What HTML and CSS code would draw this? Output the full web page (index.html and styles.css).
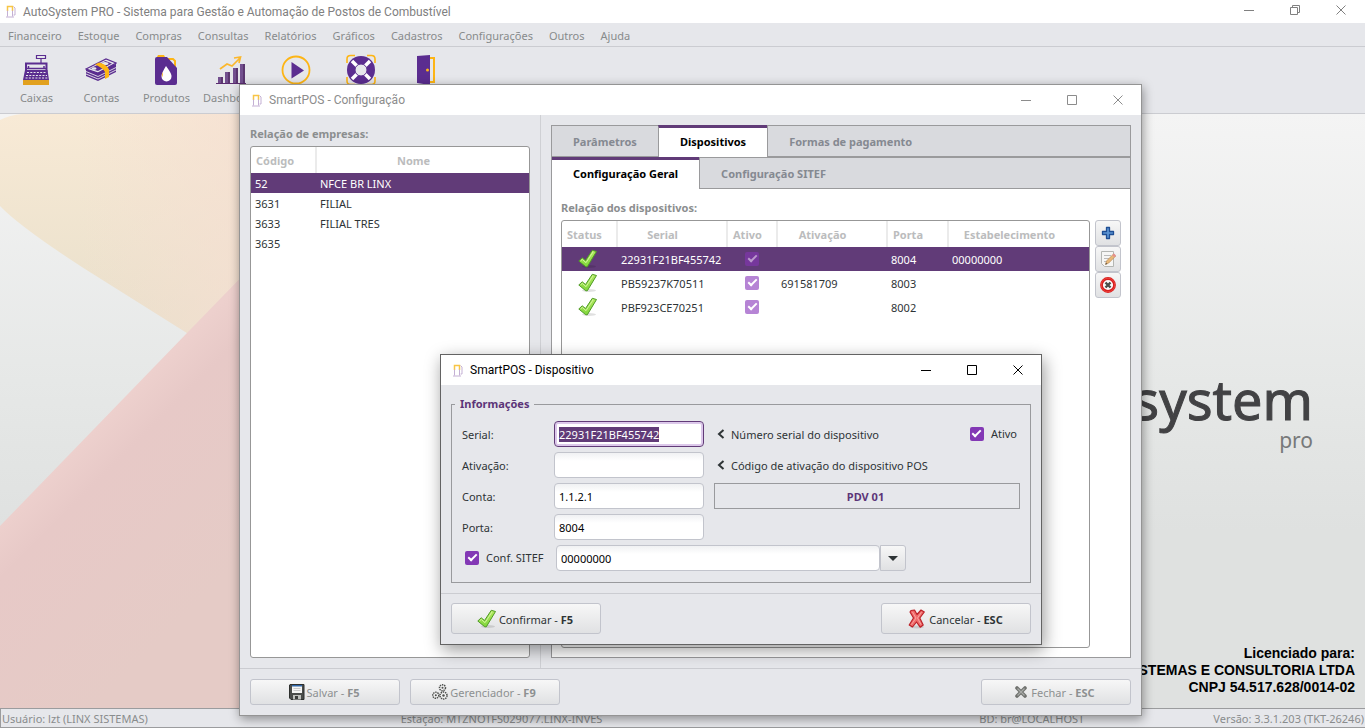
FILE: index.html
```html
<!DOCTYPE html>
<html lang="pt-BR">
<head>
<meta charset="utf-8">
<title>AutoSystem PRO</title>
<link rel="stylesheet" href="styles.css">
</head>
<body>
<svg class="defs" aria-hidden="true">
  <defs>
    <linearGradient id="leaf" x1="0" y1="0" x2="0" y2="1"><stop offset="0" stop-color="#b4ea62"/><stop offset="1" stop-color="#7fd63a"/></linearGradient>
    <symbol id="pump" viewBox="0 0 10 13">
      <path d="M1.500 6V1.500h5V6" fill="none" stroke="#f8c545" stroke-width="1.500"/>
      <path d="M1.500 5.500v6M6.500 5.500v6M0 12h8M7.500 1.500l1.500 1.500v7H7.500" fill="none" stroke="#c4b0d4"/>
    </symbol>
    <symbol id="tick" viewBox="0 0 20 20">
      <ellipse cx="11" cy="17.500" rx="7" ry="1.500" fill="#000" opacity=".12"/>
      <path d="M.8 12l3.400-3.200 3.300 2.700L14.300 1.300l4.200 1.200L9.300 17.800H7.800z" fill="url(#leaf)" stroke="#4f9a26" stroke-linejoin="round"/>
      <path d="M2.700 11.800l1.600-1.400 3.700 3.300L15.200 2.700" fill="none" stroke="#d5f5a0" stroke-width="1"/>
    </symbol>
    <symbol id="cross" viewBox="0 0 20 20">
      <ellipse cx="10" cy="18" rx="7" ry="1.500" fill="#000" opacity=".12"/>
      <path d="M4 1.500L7.500 1 10 5.500 14 1l3.300 2-4.500 6 3.400 7-3 2.200L9.500 13 5.500 18l-3.300-2L6.500 9 3 3z" fill="#f06a6a" stroke="#bb2229" stroke-width="1.200" stroke-linejoin="round"/>
      <path d="M5.500 3l3.500 6-4.500 6.500M14.500 3.200l-4 5.800 3.500 6.500" fill="none" stroke="#f9a3a1"/>
    </symbol>
    <symbol id="close" viewBox="0 0 10 10"><path d="M.5.500l9 9M9.500.500l-9 9" stroke="currentColor" fill="none"/></symbol>
    <symbol id="min" viewBox="0 0 10 10"><path d="M0 5.500h10" stroke="currentColor"/></symbol>
    <symbol id="max" viewBox="0 0 10 10"><path d="M.5.500h9v9h-9z" stroke="currentColor" fill="none"/></symbol>
    <symbol id="restore" viewBox="0 0 10 10"><path d="M.5 2.500h7v7h-7zM2.500 2.500v-2h7v7h-2" stroke="currentColor" fill="none"/></symbol>
  </defs>
</svg>

<header class="titlebar app-title">
  <svg class="pump"><use href="#pump"/></svg>
  <span class="title">AutoSystem PRO - Sistema para Gestão e Automação de Postos de Combustível</span>
  <button class="winbtn" aria-label="Minimizar"><svg><use href="#min"/></svg></button>
  <button class="winbtn" aria-label="Restaurar"><svg><use href="#restore"/></svg></button>
  <button class="winbtn" aria-label="Fechar"><svg><use href="#close"/></svg></button>
</header>

<nav class="menubar">
  <button>Financeiro</button><button>Estoque</button><button>Compras</button><button>Consultas</button><button>Relatórios</button><button>Gráficos</button><button>Cadastros</button><button>Configurações</button><button>Outros</button><button>Ajuda</button>
</nav>

<div class="toolbar">
  <button class="tool">
    <svg viewBox="0 0 32 32"><path d="M16.500 1.500h9v3h-9zM21 4.500V9" fill="none" stroke="#5b2d90" stroke-width="1.200"/><path d="M5 8.500h22.500v10h-22.500z" fill="#5b2d90"/><path d="M7 10.500h18.500v6H7z" fill="#e6e7eb"/><path d="M6 14.500h20.500M8.500 12v2M24 12v2" stroke="#5b2d90" stroke-width="1.500"/><path d="M5 16h22.500l1.500 10H3z" fill="#5b2d90"/><path d="M7 18.500h19M6 21.500h21M5.500 24h22" stroke="#e6e7eb" stroke-width="1" stroke-dasharray="2 1.300"/><path d="M3 26h26v5H3z" fill="#e2a11f"/></svg>
    <span>Caixas</span>
  </button>
  <button class="tool">
    <svg viewBox="0 0 32 32"><path d="M1 15v7l12 5 18-9v-8z" fill="#5b2d90"/><path d="M1 15L21 5l10 4-18 10z" fill="#e6e7eb" stroke="#5b2d90" stroke-width="1.300"/><path d="M5 14.500l15.500-7.500 6.500 2.500-14 7.500z" fill="#5b2d90"/><ellipse cx="20" cy="9.500" rx="3.500" ry="1.600" fill="#e6e7eb"/><ellipse cx="9" cy="14.500" rx="2.500" ry="1.200" fill="#e6e7eb"/><path d="M1 17.500l12 5 18-9M1 20l12 5 18-9" fill="none" stroke="#e6e7eb" stroke-width=".9"/><path d="M10 10.500l4-2q8 2 10 7v7.500l-4 2v-7q-3-5-10-7.500z" fill="#fdb515"/></svg>
    <span>Contas</span>
  </button>
  <button class="tool">
    <svg viewBox="0 0 32 32"><path d="M8 1h6l1 2H7z" fill="#fdb515"/><path d="M17 5h6l2 2v7" fill="none" stroke="#fdb515" stroke-width="2"/><path d="M7 3h10l10 11v15q0 2-2 2H7q-2 0-2-2V5q0-2 2-2z" fill="#5b2d90"/><path d="M16 12q6 8 5.500 10.500a5 5 0 01-10 0Q11.500 19 16 12z" fill="#fff"/><path d="M13 18q-2 3-.5 5z" fill="#fdb515"/></svg>
    <span>Produtos</span>
  </button>
  <button class="tool">
    <svg viewBox="0 0 32 32"><path d="M1 29.500h30" stroke="#5b2d70"/><path d="M3 23h5v6H3zM10 18h5v11h-5zM18 14h5v15h-5zM25 10h5v19h-5z" fill="#73508f"/><path d="M6 23h2v6H6zM13 18h2v11h-2zM21 14h2v15h-2zM28 10h2v19h-2z" fill="#5b3770"/><path d="M5 15l7-5 5 2 8-8M19 4l6.500-1-1.500 6" fill="none" stroke="#fbb72c" stroke-width="1.700"/></svg>
    <span>Dashboard</span>
  </button>
  <button class="tool" aria-label="Executar">
    <svg viewBox="0 0 32 32"><circle cx="16" cy="16" r="13.500" fill="none" stroke="#fdb515" stroke-width="1.800"/><path d="M11.500 8v16.500l12.500-8z" fill="#5b2d90"/></svg>
  </button>
  <button class="tool" aria-label="Suporte">
    <svg viewBox="0 0 32 32"><path d="M2 9V5q0-3.500 3.500-3.500H10M22 1.500h4.500Q30 1.500 30 5v4M30 23v4q0 3.500-3.500 3.500H22M10 30.500H5.500Q2 30.500 2 27v-4" fill="none" stroke="#fdb515" stroke-width="1.600"/><circle cx="16" cy="16" r="14" fill="#5b2d90"/><path d="M7 7l18 18M25 7L7 25" stroke="#fff" stroke-width="3.500"/><circle cx="16" cy="16" r="6" fill="#e6e7eb" stroke="#5b2d90"/></svg>
  </button>
  <button class="tool" aria-label="Sair">
    <svg viewBox="0 0 32 32"><path d="M19 4h5v24h-5z" fill="none" stroke="#fdb515" stroke-width="2"/><path d="M7 2l13-1v30L7 29z" fill="#5b2d90"/><circle cx="17.500" cy="16" r="1.500" fill="#fdb515"/></svg>
  </button>
</div>

<main class="desktop">
  <svg class="wallpaper" viewBox="0 0 1365 594" preserveAspectRatio="xMinYMin slice" aria-hidden="true">
    <defs>
      <linearGradient id="sand" x1="0" y1="0" x2="0" y2="1"><stop offset="0" stop-color="#f8ead6"/><stop offset="1" stop-color="#e8dfca"/></linearGradient>
      <linearGradient id="peach" x1="0" y1="0" x2="1" y2="0"><stop offset=".3" stop-color="#f5dfd2" stop-opacity="0"/><stop offset="1" stop-color="#f5dfd2" stop-opacity=".8"/></linearGradient>
      <linearGradient id="rose" gradientUnits="userSpaceOnUse" x1="100" y1="309" x2="240" y2="449"><stop offset="0" stop-color="#edd0cd"/><stop offset=".2" stop-color="#e7c9c7"/><stop offset="1" stop-color="#e5cbc6"/></linearGradient>
    </defs>
    <path d="M0 6Q10 1 22 0H400V219H187L85 155Q20 113 0 92z" fill="url(#sand)"/>
    <path d="M0 6Q10 1 22 0H260V219H187L85 155Q20 113 0 92z" fill="url(#peach)"/>
    <path d="M0 412L187 219 400 0V594H0z" fill="url(#rose)"/>
  </svg>
  <div class="brand"><div class="brand-name">system</div><div class="brand-edition">pro</div></div>
  <div class="license">
    <p>Licenciado para:</p>
    <p>STEMAS E CONSULTORIA LTDA</p>
    <p>CNPJ 54.517.628/0014-02</p>
  </div>
</main>

<footer class="statusbar">
  <span>Usuário: lzt (LINX SISTEMAS)</span>
  <span>Estação: MTZNOTFS029077.LINX-INVES</span>
  <span>BD: br@LOCALHOST</span>
  <span class="version">Versão: 3.3.1.203 (TKT-26246)</span>
</footer>

<section class="window config" aria-label="SmartPOS - Configuração">
  <div class="titlebar">
    <svg class="pump"><use href="#pump"/></svg>
    <span class="title">SmartPOS - Configuração</span>
    <button class="winbtn" aria-label="Minimizar"><svg><use href="#min"/></svg></button>
    <button class="winbtn" aria-label="Maximizar"><svg><use href="#max"/></svg></button>
    <button class="winbtn" aria-label="Fechar"><svg><use href="#close"/></svg></button>
  </div>
  <div class="panes">
    <div class="companies">
      <h2>Relação de empresas:</h2>
      <div class="list">
        <table class="grid short">
          <colgroup><col class="w-code"><col></colgroup>
          <thead><tr><th>Código</th><th>Nome</th></tr></thead>
          <tbody>
            <tr class="selected"><td>52</td><td>NFCE BR LINX</td></tr>
            <tr><td>3631</td><td>FILIAL</td></tr>
            <tr><td>3633</td><td>FILIAL TRES</td></tr>
            <tr><td>3635</td><td></td></tr>
          </tbody>
        </table>
      </div>
    </div>
    <div class="details">
      <div class="notebook">
        <div class="tabs" role="tablist">
          <button class="tab" role="tab">Parâmetros</button><button class="tab active" role="tab" aria-selected="true">Dispositivos</button><button class="tab last" role="tab">Formas de pagamento</button>
        </div>
        <div class="tabs" role="tablist">
          <button class="tab active" role="tab" aria-selected="true">Configuração Geral</button><button class="tab last" role="tab">Configuração SITEF</button>
        </div>
        <div class="page">
          <h2>Relação dos dispositivos:</h2>
          <div class="devices">
            <div class="list">
              <table class="grid tall">
                <colgroup><col class="w-status"><col class="w-serial"><col class="w-active"><col class="w-serial"><col class="w-port"><col></colgroup>
                <thead><tr><th>Status</th><th>Serial</th><th>Ativo</th><th>Ativação</th><th>Porta</th><th>Estabelecimento</th></tr></thead>
                <tbody>
                  <tr class="selected"><td class="mid"><svg class="tick"><use href="#tick"/></svg></td><td>22931F21BF455742</td><td class="mid"><input type="checkbox" class="check dim" checked disabled aria-label="Ativo"></td><td></td><td>8004</td><td>00000000</td></tr>
                  <tr><td class="mid"><svg class="tick"><use href="#tick"/></svg></td><td>PB59237K70511</td><td class="mid"><input type="checkbox" class="check dim" checked disabled aria-label="Ativo"></td><td>691581709</td><td>8003</td><td></td></tr>
                  <tr><td class="mid"><svg class="tick"><use href="#tick"/></svg></td><td>PBF923CE70251</td><td class="mid"><input type="checkbox" class="check dim" checked disabled aria-label="Ativo"></td><td></td><td>8002</td><td></td></tr>
                </tbody>
              </table>
            </div>
            <div class="side">
              <button class="btn square" aria-label="Adicionar"><svg viewBox="0 0 16 16"><path d="M6.500 2.500h3v4h4v3h-4v4h-3v-4h-4v-3h4z" fill="#5b93d2" stroke="#1f4f95" stroke-width="1.300" stroke-linejoin="round"/></svg></button>
              <button class="btn square" aria-label="Editar"><svg viewBox="0 0 16 16"><path d="M1.500.500h12v15h-9l-3-3z" fill="#f6f6f5" stroke="#b4b6b3"/><path d="M4 4.500h7M4 7.500h5M4 10.500h3" stroke="#bbb"/><path d="M5.500 13.500l1-3.500 7-7 2.200 2-7 7z" fill="#e9b878" stroke="#b98a55" stroke-width=".7"/><path d="M12.300 4.200l1.700-1.700 2 2-1.700 1.700z" fill="#e78f8f"/><path d="M5.500 13.500l.5-1.700 1.200 1.100z" fill="#444"/></svg></button>
              <button class="btn square" aria-label="Remover"><svg viewBox="0 0 16 16"><circle cx="8" cy="8" r="6.500" fill="#fafafa" stroke="#d81e1e" stroke-width="2.800"/><circle cx="8" cy="8" r="6.800" fill="none" stroke="#f04a43" stroke-width=".8"/><path d="M5.500 5.500l5 5M10.500 5.500l-5 5" stroke="#4b4d48" stroke-width="2.400"/></svg></button>
            </div>
          </div>
        </div>
      </div>
    </div>
  </div>
  <div class="actions">
    <button class="btn faded"><svg class="i16" viewBox="0 0 16 16"><path d="M1 .500h14v15H2L.5 14V1z" fill="#4a4c4a" stroke="#2d2f2e"/><path d="M3 1h10v8H3z" fill="#f5f5f4"/><path d="M3 1h10v1.500H3z" fill="#2f66a8"/><path d="M4.500 4.500h7M4.500 6.500h7" stroke="#c9c9c9"/><path d="M4 11h8v4.500H4z" fill="#bfc1bd"/><path d="M6 12h3v3H6z" fill="#3b3d3b"/></svg><span>Salvar - <b>F5</b></span></button>
    <button class="btn faded"><svg class="i16" viewBox="0 0 16 16"><g fill="#f2f2f2" stroke="#4d4f4d" stroke-width="1.500" stroke-dasharray="1.400 .8"><circle cx="10.500" cy="3.800" r="3"/><circle cx="3.800" cy="11.300" r="3"/><circle cx="11.500" cy="11.500" r="3.500"/></g><g fill="#4d4f4d"><circle cx="10.500" cy="3.800" r="1"/><circle cx="3.800" cy="11.300" r="1"/><circle cx="11.500" cy="11.500" r="1.200"/></g></svg><span>Gerenciador - <b>F9</b></span></button>
    <button class="btn faded end"><svg class="i12" viewBox="0 0 12 12"><path d="M2 2l8 8M10 2l-8 8" stroke="#70726f" stroke-width="3.600" stroke-linecap="round"/><path d="M2.500 2.500l7 7M9.500 2.500l-7 7" stroke="#a9aba8" stroke-width="1.200"/></svg><span class="spaced">Fechar - <b>ESC</b></span></button>
  </div>
</section>

<section class="window dialog" role="dialog" aria-label="SmartPOS - Dispositivo">
  <div class="titlebar">
    <svg class="pump"><use href="#pump"/></svg>
    <span class="title">SmartPOS - Dispositivo</span>
    <button class="winbtn" aria-label="Minimizar"><svg><use href="#min"/></svg></button>
    <button class="winbtn" aria-label="Maximizar"><svg><use href="#max"/></svg></button>
    <button class="winbtn" aria-label="Fechar"><svg><use href="#close"/></svg></button>
  </div>
  <form class="form">
    <fieldset>
      <legend>Informações</legend>
      <div class="fields">
        <label class="name" for="serial">Serial:</label>
        <input id="serial" class="entry" type="text" value="22931F21BF455742">
        <div class="hint"><svg viewBox="0 0 8 10"><path d="M6.500 1L2 5l4.500 4" fill="none" stroke="#2e3436" stroke-width="2"/></svg><span>Número serial do dispositivo</span><label class="flag"><input type="checkbox" class="check" checked>Ativo</label></div>
        <label class="name" for="activation">Ativação:</label>
        <input id="activation" class="entry" type="text">
        <div class="hint"><svg viewBox="0 0 8 10"><path d="M6.500 1L2 5l4.500 4" fill="none" stroke="#2e3436" stroke-width="2"/></svg><span>Código de ativação do dispositivo POS</span></div>
        <label class="name" for="account">Conta:</label>
        <input id="account" class="entry" type="text" value="1.1.2.1">
        <output class="account-name" for="account">PDV 01</output>
        <label class="name" for="port">Porta:</label>
        <input id="port" class="entry" type="text" value="8004">
      </div>
      <div class="sitef">
        <label class="flag"><input type="checkbox" class="check" checked>Conf. SITEF</label>
        <div class="combo"><select class="entry" aria-label="Conf. SITEF"><option>00000000</option></select><span class="btn drop"><svg viewBox="0 0 10 5"><path d="M0 0h10L5 5z" fill="#2e3436"/></svg></span></div>
      </div>
    </fieldset>
  </form>
  <div class="actions">
    <button class="btn"><svg class="i20"><use href="#tick"/></svg><span>Confirmar - <b>F5</b></span></button>
    <button class="btn end"><svg class="i20"><use href="#cross"/></svg><span>Cancelar - <b>ESC</b></span></button>
  </div>
</section>
<script src="app.js"></script>
</body>
</html>
```
FILE: app.js
```js
const serial = document.getElementById('serial');
serial.focus();
serial.select();
```
FILE: styles.css
```css
* { box-sizing: border-box; }
body {
  margin: 0;
  height: 100vh;
  display: flex;
  flex-direction: column;
  overflow: hidden;
  background: #e6e7eb;
  color: #2e3436;
  font: 11px/16px "Noto Sans", "Open Sans", sans-serif;
}
button, input, select { font: inherit; color: inherit; margin: 0; }
h2 { margin: 0; font-size: 11px; line-height: 16px; font-weight: 700; color: #8b8e8f; }
.defs { position: absolute; width: 0; height: 0; }

.titlebar { display: flex; align-items: center; background: #fff; color: #8c8c8c; height: 30px; flex: none; padding-left: 12px; }
.app-title { height: 23px; padding: 0 1px 0 6px; color: #808080; }
.app-title .winbtn { padding-bottom: 3px; }
.pump { width: 10px; height: 13px; margin-right: 7px; }
.title { flex: 1; font: 12px/16px Roboto, "Noto Sans", sans-serif; white-space: nowrap; }
.winbtn { width: 46px; height: 100%; padding: 0; border: 0; background: none; display: flex; align-items: center; justify-content: center; }
.winbtn svg { width: 10px; height: 10px; }

.menubar { display: flex; flex: none; height: 24px; padding: 2px 0 0 8px; gap: 16px; border-bottom: 1px solid #cbccd1; color: #888b8c; align-items: center; }
.menubar button { padding: 0; border: 0; background: none; }
.toolbar { display: flex; flex: none; height: 67px; padding: 7px 0 0 4px; border-bottom: 1px solid #cbccd1; }
.tool { width: 65px; padding: 0; border: 0; background: none; display: flex; flex-direction: column; align-items: center; gap: 4px; color: #888b8c; }
.tool svg { width: 32px; height: 32px; margin-right: 2px; }

.desktop { position: relative; flex: 1; min-height: 0; display: flex; flex-direction: column; justify-content: space-between; align-items: flex-end; background: linear-gradient(#f4f4f4, #e6e8e7 45%, #dfe1e0 70%); }
.wallpaper { position: absolute; inset: 0; width: 100%; height: 100%; }
.brand { position: relative; padding: 254px 52px 0 0; text-align: right; color: #424244; font-family: "Noto Sans", "Open Sans", sans-serif; }
.brand-name { font-size: 54px; line-height: 62px; -webkit-text-stroke: 1px #424244; }
.brand-edition { font-size: 21px; line-height: 20px; color: #77797a; }
.license { position: relative; padding: 0 10px 12px 0; text-align: right; color: #000; font: bold 14px/17px "Liberation Sans", Arial, sans-serif; }
.license p { margin: 0; }

.statusbar { flex: none; height: 20px; display: grid; grid-template-columns: 399fr 579fr 180fr 205fr; align-items: center; padding: 2px 1px 0; border: 1px solid #9b9c9e; border-right: 0; color: #898c8d; white-space: nowrap; }
.version { text-align: right; }

.window { position: absolute; display: flex; flex-direction: column; background: #e6e7eb; border: 1px solid #949494; box-shadow: 1px 3px 10px rgba(0, 0, 0, .4); }
.config { inset: 84px 223px 12px 239px; }
.dialog { left: 440px; top: 354px; width: 602px; border-color: #636363; box-shadow: 2px 5px 16px rgba(0, 0, 0, .4); }
.dialog .titlebar { color: #000; }

.panes { flex: 1; min-height: 0; display: flex; }
.companies { width: 301px; padding: 11px 10px 10px; border-right: 1px solid #cfd0d4; display: flex; flex-direction: column; gap: 4px; }
.details { flex: 1; min-width: 0; padding: 10px; display: flex; }
.list { flex: 1; min-height: 0; min-width: 0; background: #fff; border: 1px solid #979797; border-radius: 3px; overflow: hidden; }

.grid { width: 100%; border-collapse: collapse; table-layout: fixed; }
.grid th { height: 26px; padding: 2px 24px 0 5px; font-weight: 700; color: #bbbcbd; text-align: center; border-right: 2px solid #ebebeb; white-space: nowrap; }
.grid th:last-child { border-right: 0; }
.grid td { padding: 2px 4px 0; white-space: nowrap; }
.short td { height: 20px; }
.tall td { height: 24px; }
.grid .mid { padding: 0; text-align: center; }
.grid .mid .check { display: grid; margin: 0 auto; }
.grid .selected { background: #613b78; color: #fff; }
.w-code { width: 65px; }
.w-status { width: 55px; }
.w-serial { width: 110px; }
.w-active { width: 50px; }
.w-port { width: 61px; }
.tick { display: block; width: 20px; height: 20px; margin: 0 auto 0 16px; }

.notebook { flex: 1; min-width: 0; display: flex; flex-direction: column; background: #fff; border: 1px solid #9a9a9c; border-top: 0; }
.tabs { display: flex; flex: none; }
.tab { height: 32px; padding: 2px 21px 0; background: #d9dade; border: 0; border-top: 1px solid #9a9a9c; border-bottom: 1px solid #9a9a9c; color: #858991; font-weight: 700; }
.tab.active { padding: 0 21px 1px; background: #fff; border-top: 3px solid #613b78; border-bottom: 0; color: #000; }
.tab:not(.active) + .tab.active, .tab.active + .tab { border-left: 1px solid #9a9a9c; }
.tab.last { flex: 1; text-align: left; }
.page { flex: 1; min-height: 0; display: flex; flex-direction: column; padding: 11px 9px 9px; gap: 4px; }
.devices { flex: 1; min-height: 0; display: flex; gap: 5px; }
.side { display: flex; flex-direction: column; }

.btn { display: flex; align-items: center; justify-content: center; padding: 0; border: 1px solid #c2c4cc; border-radius: 3px; background: linear-gradient(#f7f7f7, #e0e1e3); }
.btn > span { padding-top: 2px; }
.square { width: 26px; height: 26px; }
.square svg { width: 16px; height: 16px; }
.actions { display: flex; flex: none; gap: 10px; padding: 10px; border-top: 1px solid #cbccd1; }
.actions .btn { width: 150px; height: 26px; padding-right: 2px; }
.dialog .actions { padding: 9px 10px 10px; }
.dialog .actions .btn { height: 31px; }
.actions .end { margin-left: auto; }
.faded { color: #8d9091; }
.i12 { width: 12px; height: 12px; }
.i16 { width: 16px; height: 16px; margin-right: 2px; }
.i20 { width: 20px; height: 20px; margin-right: 2px; }
.spaced { margin-left: 4px; }

.form { padding: 11px 10px 10px; }
fieldset { margin: 0; padding: 0 3px; border: 1px solid #999a9d; min-width: 0; }
legend { padding: 0 5px; color: #5c3578; font-weight: 700; }
.fields { display: grid; grid-template-columns: 92px 150px 1fr; grid-auto-rows: 26px; row-gap: 5px; align-items: center; padding: 9px 7px 0; }
.name, .hint > span { padding-top: 2px; }
.entry { width: 100%; height: 26px; padding: 1px 4px 0; border: 1px solid #c2c4cc; border-radius: 4px; background: linear-gradient(#f0f1f3, #fff 8px); color: #000; }
.entry:focus { outline: 0; border-color: #613b78; box-shadow: inset 0 0 0 2px #dcc8ea; background: #fff; }
.entry::selection { background: #613b78; color: #fff; }
.hint { display: flex; align-items: center; padding-left: 13px; }
.hint > svg { width: 8px; height: 10px; margin-right: 6px; }
.flag { display: flex; align-items: center; gap: 7px; }
.hint .flag { margin-left: auto; padding-right: 3px; }
.account-name { margin-left: 10px; height: 26px; padding: 2px 3px 0 0; display: flex; align-items: center; justify-content: center; border: 1px solid #999a9d; color: #5c3578; font-weight: 700; }
.check { appearance: none; width: 14px; height: 14px; border-radius: 2px; background: #8338b5; display: inline-grid; place-items: center; }
.check::after { content: ""; box-sizing: border-box; width: 9px; height: 5px; margin-bottom: 3px; border: solid #fff; border-width: 0 0 2px 2px; transform: rotate(-45deg); }
.dim { background: #b684d5; }
.selected .dim { background: #76379c; }
.selected .dim::after { border-color: #bb9acd; }
.sitef { display: flex; align-items: center; padding: 5px 7px 11px 10px; }
.sitef .flag { width: 91px; white-space: nowrap; }
.combo { display: flex; width: 350px; }
.combo select { flex: 1; appearance: none; }
.drop { width: 26px; height: 26px; border-radius: 0 3px 3px 0; pointer-events: none; }
.combo .drop { padding-top: 0; }
.drop svg { width: 10px; height: 5px; }
```
